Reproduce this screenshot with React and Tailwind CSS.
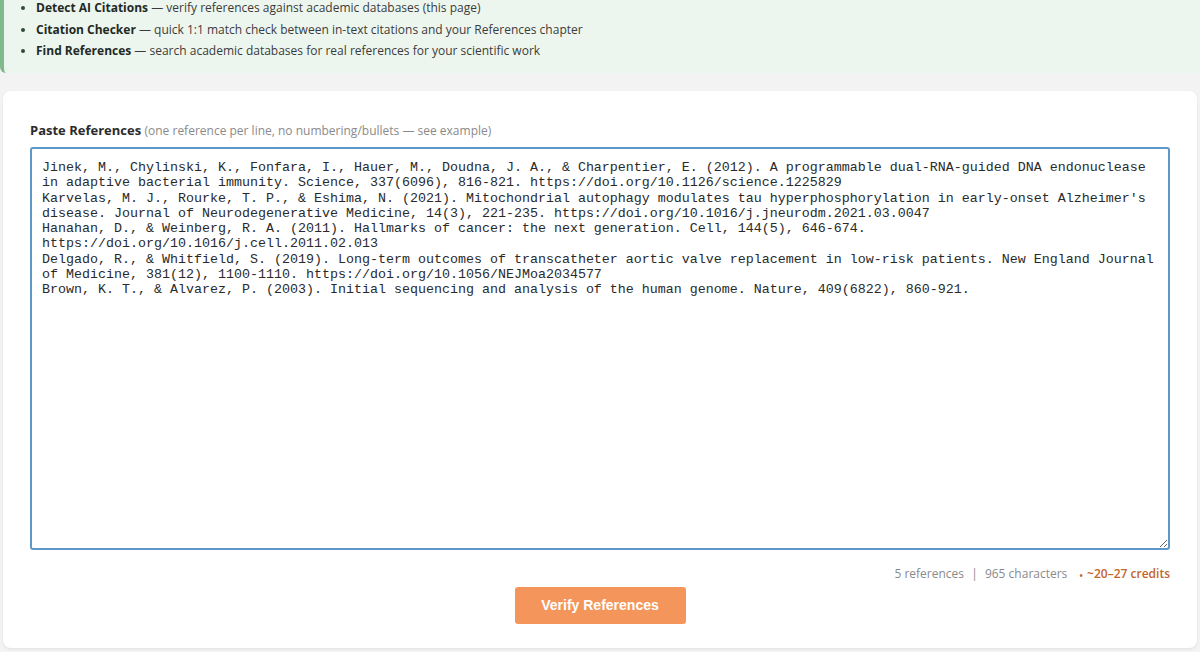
import { useState } from 'react'

const refsText = `Jinek, M., Chylinski, K., Fonfara, I., Hauer, M., Doudna, J. A., & Charpentier, E. (2012). A programmable dual-RNA-guided DNA endonuclease in adaptive bacterial immunity. Science, 337(6096), 816-821. https://doi.org/10.1126/science.1225829
Karvelas, M. J., Rourke, T. P., & Eshima, N. (2021). Mitochondrial autophagy modulates tau hyperphosphorylation in early-onset Alzheimer's disease. Journal of Neurodegenerative Medicine, 14(3), 221-235. https://doi.org/10.1016/j.jneurodm.2021.03.0047
Hanahan, D., & Weinberg, R. A. (2011). Hallmarks of cancer: the next generation. Cell, 144(5), 646-674. https://doi.org/10.1016/j.cell.2011.02.013
Delgado, R., & Whitfield, S. (2019). Long-term outcomes of transcatheter aortic valve replacement in low-risk patients. New England Journal of Medicine, 381(12), 1100-1110. https://doi.org/10.1056/NEJMoa2034577
Brown, K. T., & Alvarez, P. (2003). Initial sequencing and analysis of the human genome. Nature, 409(6822), 860-921.`

const tools = [
  { name: 'Detect AI Citations', desc: 'verify references against academic databases (this page)' },
  { name: 'Citation Checker', desc: 'quick 1:1 match check between in-text citations and your References chapter' },
  { name: 'Find References', desc: 'search academic databases for real references for your scientific work' },
]

export default function App() {
  const [text, setText] = useState(refsText)

  return (
    <div className="min-h-screen bg-[#f3f3f3] overflow-hidden" style={{ fontFamily: '"Open Sans", sans-serif' }}>
      {/* Tools banner */}
      <div className="bg-[#edf6ee] border-l-4 border-[#80b98b] rounded-bl-md pl-[18px] pb-[15px]">
        <ul className="list-disc pl-[14px] text-[12px] leading-[15px] space-y-[6.5px] text-[#3b3b3b] marker:text-[#2f4a38]">
          {tools.map((t) => (
            <li key={t.name}>
              <span className="font-bold text-[#1f2a24]">{t.name}</span> — {t.desc}
            </li>
          ))}
        </ul>
      </div>

      {/* Main card */}
      <div className="mx-[3px] mt-[18px] bg-white rounded-lg shadow-[0_1px_3px_rgba(0,0,0,0.08)] px-[27px] pt-[30px] pb-[24px]">
        <label className="block text-[13px] leading-[18px] mb-[7px]">
          <span className="font-bold text-[#2b2b2b]">Paste References</span>{' '}
          <span className="text-[#8a8a8a] text-[12px]">(one reference per line, no numbering/bullets — see example)</span>
        </label>
        <textarea
          value={text}
          onChange={(e) => setText(e.target.value)}
          spellCheck={false}
          className="block w-full h-[403px] border-2 border-[#5e98c9] rounded-[3px] px-[10px] pt-[11px] pb-[9px] text-[13.33px] leading-[15.3px] text-[#2a2a2a] outline-none resize-y"
          style={{ fontFamily: '"Liberation Mono", monospace' }}
        />
        <div className="flex justify-end items-center mt-[15px] text-[12px] leading-[18px]">
          <span className="text-[#8a8a8a]">5 references <span className="mx-[4px]">|</span> 965 characters</span>
          <span className="ml-[12px] text-[#c4652c] font-semibold"><span className="text-[10px] mr-[4px] align-middle">•</span>~20–27 credits</span>
        </div>
        <div className="flex justify-center mt-[3px]">
          <button
            className="w-[171px] h-[37px] bg-[#f4965c] text-white font-bold text-[14px] rounded-[3px]"
            style={{ fontFamily: '"Liberation Sans", Arial, sans-serif' }}
          >
            Verify References
          </button>
        </div>
      </div>
    </div>
  )
}
